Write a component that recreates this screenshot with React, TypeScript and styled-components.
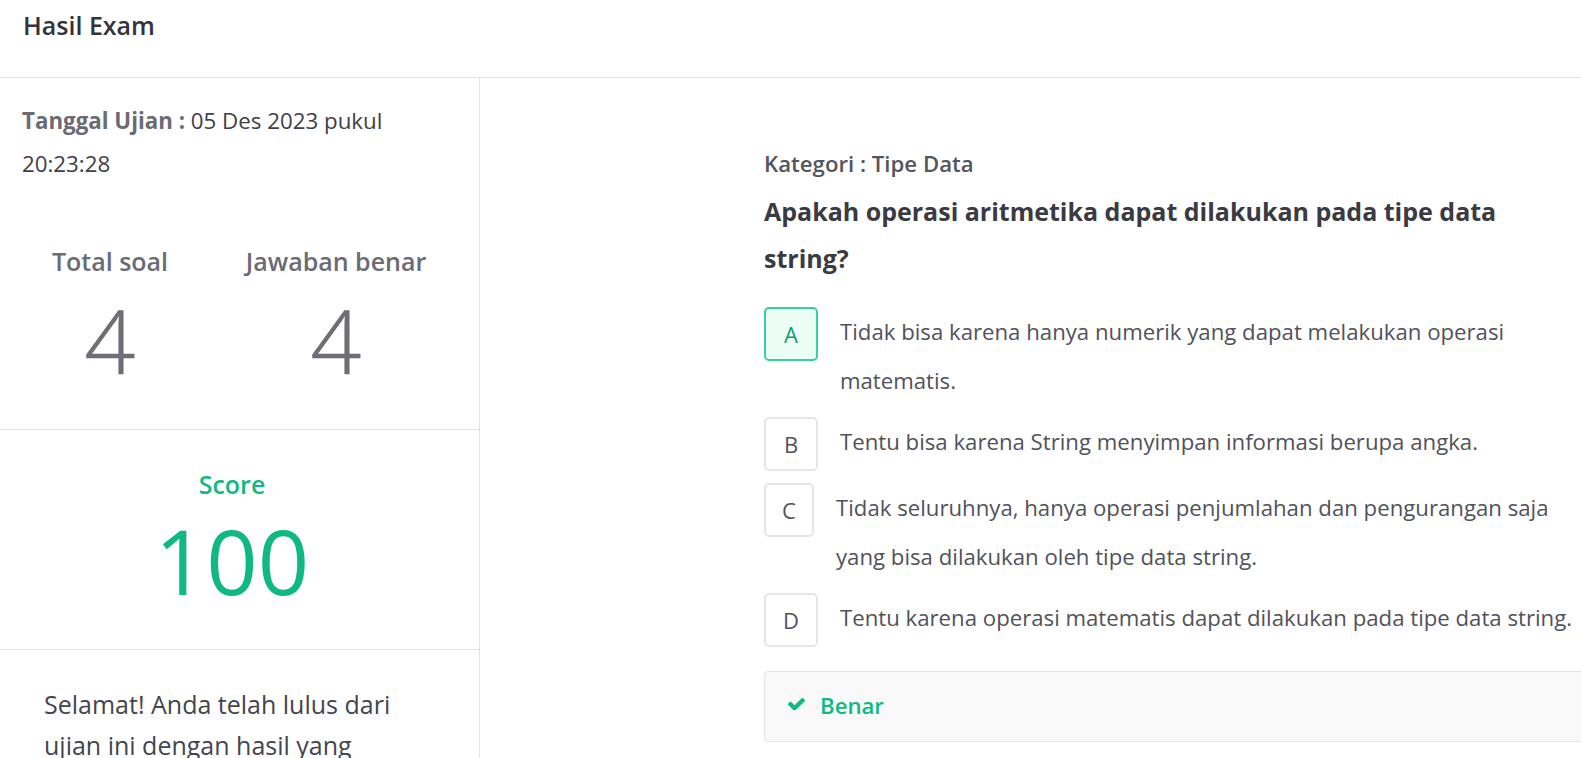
import React from "react";
import styled, { createGlobalStyle } from "styled-components";

const GlobalStyle = createGlobalStyle`
  html, body {
    margin: 0;
    padding: 0;
    overflow: hidden;
    background: #ffffff;
  }
  body {
    font-family: "Open Sans", "Noto Sans", Arial, sans-serif;
    color: #3f3f46;
  }
  * { box-sizing: border-box; }
`;

const Page = styled.div`
  width: 1581px;
  height: 758px;
  display: flex;
  flex-direction: column;
  overflow: hidden;
`;

const Header = styled.header`
  height: 78px;
  flex: none;
  padding: 7px 23px 0;
  border-bottom: 1px solid #e3e3e3;
`;

const Title = styled.h1`
  margin: 0;
  font-size: 25px;
  line-height: 37.5px;
  font-weight: 600;
  color: #333338;
`;

const Body = styled.div`
  flex: 1;
  display: flex;
  min-height: 0;
`;

const Sidebar = styled.aside`
  width: 480px;
  flex: none;
  border-right: 1px solid #e3e3e3;
  display: flex;
  flex-direction: column;
`;

const DateSection = styled.div`
  padding: 21px 22px 0;
  font-size: 22.3px;
  line-height: 43px;
  color: #404048;
`;

const DateLabel = styled.span`
  font-weight: 700;
  color: #6b6b74;
`;

const StatsSection = styled.div`
  padding: 58px 0 44px;
  display: grid;
  grid-template-columns: 220px 232px;
  border-bottom: 1px solid #e3e3e3;
`;

const Stat = styled.div`
  display: flex;
  flex-direction: column;
  align-items: center;
`;

const StatLabel = styled.div`
  font-size: 25px;
  line-height: 37.5px;
  font-weight: 600;
  color: #6b6b74;
  white-space: nowrap;
`;

const StatValue = styled.div`
  margin-top: 14px;
  font-size: 89px;
  line-height: 90px;
  font-weight: 300;
  color: #6e6e77;
  -webkit-text-stroke: 0.6px #6e6e77;
`;

const ScoreSection = styled.div`
  padding: 36px 15px 44px 0;
  display: flex;
  flex-direction: column;
  align-items: center;
  border-bottom: 1px solid #e3e3e3;
`;

const ScoreLabel = styled.div`
  font-size: 25px;
  line-height: 37.5px;
  font-weight: 600;
  color: #10b981;
`;

const ScoreValue = styled.div`
  margin-top: 12px;
  font-size: 90px;
  line-height: 90px;
  font-weight: 400;
  color: #10b981;
`;

const MessageSection = styled.div`
  padding: 34px 44px 0;
  font-size: 25px;
  line-height: 41px;
  color: #45454d;
`;

const Main = styled.main`
  flex: 1;
  min-width: 0;
  overflow: hidden;
  padding: 69px 0 0 284px;
`;

const Card = styled.section`
  width: 820px;
`;

const Category = styled.div`
  font-size: 22.2px;
  line-height: 33.75px;
  font-weight: 600;
  color: #55555d;
`;

const Question = styled.h2`
  margin: 7px 0 25px;
  font-size: 25px;
  line-height: 47px;
  font-weight: 700;
  color: #3a3a42;
`;

const OptionList = styled.div`
  display: flex;
  flex-direction: column;
  gap: 12px;
`;

const OptionRow = styled.div`
  display: flex;
  align-items: flex-start;
  gap: 22px;
`;

const LetterBox = styled.div<{ $selected?: boolean; $width: number }>`
  flex: none;
  width: ${(p) => p.$width}px;
  height: 54px;
  display: flex;
  align-items: center;
  justify-content: center;
  border-radius: 5px;
  border: ${(p) => (p.$selected ? "2px solid #34d399" : "2px solid #e6e6e9")};
  background: ${(p) => (p.$selected ? "#ecfdf5" : "#ffffff")};
  color: ${(p) => (p.$selected ? "#0f9f74" : "#52525b")};
  font-size: 22px;
`;

const OptionText = styled.div`
  font-size: 22.2px;
  line-height: 49px;
  color: #52525b;
`;

const ResultBox = styled.div`
  margin-top: 24px;
  height: 71px;
  display: flex;
  align-items: center;
  gap: 15px;
  padding: 0 23px;
  background: #f9f9f9;
  border: 1px solid #e3e3e3;
  border-radius: 4px;
  color: #10b981;
`;

const ResultText = styled.span`
  font-size: 22.2px;
  font-weight: 600;
  line-height: 1;
`;

const CheckSvg = styled.svg`
  width: 17px;
  height: 12px;
  flex: none;
  margin-top: -5px;
  fill: #10b981;
`;

const CheckIcon = () => (
  <CheckSvg viewBox="121 362 1550 1068" aria-hidden="true">
    <path d="M1671 566q0 40-28 68l-724 724-136 136q-28 28-68 28t-68-28l-136-136-362-362q-28-28-28-68t28-68l136-136q28-28 68-28t68 28l294 295 656-657q28-28 68-28t68 28l136 136q28 28 28 68z" />
  </CheckSvg>
);

const options = [
  { letter: "A", text: "Tidak bisa karena hanya numerik yang dapat melakukan operasi matematis.", selected: true, width: 54 },
  { letter: "B", text: "Tentu bisa karena String menyimpan informasi berupa angka.", selected: false, width: 54 },
  { letter: "C", text: "Tidak seluruhnya, hanya operasi penjumlahan dan pengurangan saja yang bisa dilakukan oleh tipe data string.", selected: false, width: 50 },
  { letter: "D", text: "Tentu karena operasi matematis dapat dilakukan pada tipe data string.", selected: false, width: 54 },
];

export default function App() {
  return (
    <>
      <GlobalStyle />
      <Page>
        <Header>
          <Title>Hasil Exam</Title>
        </Header>
        <Body>
          <Sidebar>
            <DateSection>
              <DateLabel>Tanggal Ujian :</DateLabel> 05 Des 2023 pukul 20:23:28
            </DateSection>
            <StatsSection>
              <Stat>
                <StatLabel>Total soal</StatLabel>
                <StatValue>4</StatValue>
              </Stat>
              <Stat>
                <StatLabel>Jawaban benar</StatLabel>
                <StatValue>4</StatValue>
              </Stat>
            </StatsSection>
            <ScoreSection>
              <ScoreLabel>Score</ScoreLabel>
              <ScoreValue>100</ScoreValue>
            </ScoreSection>
            <MessageSection>
              Selamat! Anda telah lulus dari ujian ini dengan hasil yang memuaskan.
            </MessageSection>
          </Sidebar>
          <Main>
            <Card>
              <Category>Kategori : Tipe Data</Category>
              <Question>Apakah operasi aritmetika dapat dilakukan pada tipe data string?</Question>
              <OptionList>
                {options.map((o) => (
                  <OptionRow key={o.letter}>
                    <LetterBox $selected={o.selected} $width={o.width}>
                      {o.letter}
                    </LetterBox>
                    <OptionText>{o.text}</OptionText>
                  </OptionRow>
                ))}
              </OptionList>
              <ResultBox>
                <CheckIcon />
                <ResultText>Benar</ResultText>
              </ResultBox>
            </Card>
          </Main>
        </Body>
      </Page>
    </>
  );
}
